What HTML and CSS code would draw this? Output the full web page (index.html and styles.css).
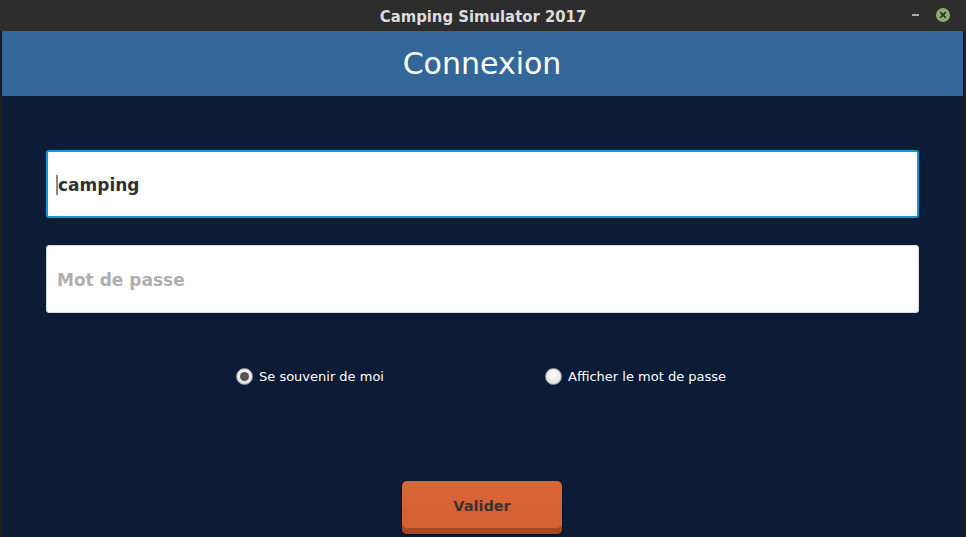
FILE: index.html
```html
<!DOCTYPE html>
<html>
<head>
<meta charset="utf-8">
<link rel="stylesheet" href="styles.css">
</head>
<body>
<div class="window">
  <div class="titlebar">
    <span class="title">Camping Simulator 2017</span>
    <div class="controls">
      <span class="min"></span>
      <span class="close">
        <svg width="14" height="14" viewBox="0 0 14 14"><circle cx="7" cy="7" r="7" fill="#8fae6e"/><path d="M4.6 4.6 L9.4 9.4 M9.4 4.6 L4.6 9.4" stroke="#2d2d2d" stroke-width="1.6" stroke-linecap="round"/></svg>
      </span>
    </div>
  </div>
  <div class="content">
    <div class="header">Connexion</div>
    <div class="form">
      <div class="field focused"><span class="caret"></span><span class="value">camping</span></div>
      <div class="field"><span class="placeholder">Mot de passe</span></div>
      <div class="options">
        <label class="radio"><span class="dot checked"></span>Se souvenir de moi</label>
        <label class="radio"><span class="dot"></span>Afficher le mot de passe</label>
      </div>
      <div class="actions">
        <button class="btn">Valider</button>
      </div>
    </div>
  </div>
</div>
</body>
</html>
```
FILE: styles.css
```css
html, body {
  margin: 0;
  padding: 0;
  width: 966px;
  height: 537px;
  overflow: hidden;
  background: #1c1c1c;
}
.window {
  width: 966px;
  height: 537px;
  display: flex;
  flex-direction: column;
  background: #1c1c1c;
}
.titlebar {
  height: 31px;
  background: #2d2d2d;
  display: flex;
  align-items: center;
  justify-content: center;
  position: relative;
  flex: none;
}
.title {
  font-family: "DejaVu Sans Condensed", "DejaVu Sans", sans-serif;
  font-weight: bold;
  font-size: 16.5px;
  color: #dcdcdc;
  padding-top: 1px;
}
.controls {
  position: absolute;
  right: 16px;
  top: 8px;
  display: flex;
  align-items: center;
  gap: 17px;
}
.min {
  width: 7px;
  height: 2px;
  background: #a8a8a8;
  display: block;
}
.close { display: block; height: 14px; }
.content {
  flex: 1;
  display: flex;
  flex-direction: column;
  margin-left: 2px;
  margin-right: 3px;
  background: #0c1b36;
}
.header {
  height: 65px;
  background: #336699;
  color: #ffffff;
  font-family: "DejaVu Sans", sans-serif;
  font-size: 30px;
  display: flex;
  align-items: center;
  justify-content: center;
  flex: none;
  box-sizing: border-box;
  padding-right: 1px;
}
.form {
  padding: 54px 44px 0 44px;
  display: flex;
  flex-direction: column;
}
.field {
  height: 68px;
  box-sizing: border-box;
  background: #ffffff;
  border: 1px solid #dadada;
  border-radius: 3px;
  display: flex;
  align-items: center;
  padding-left: 10px;
  font-family: "DejaVu Sans", sans-serif;
  font-weight: bold;
  font-size: 17px;
  margin-bottom: 27px;
}
.field.focused {
  border: 2px solid #0a9ad6;
  padding-left: 8px;
}
.caret {
  width: 2px;
  height: 20px;
  background: #888;
  display: inline-block;
  margin-top: 1px;
}
.value { color: #33302f; margin-top: 2px; }
.placeholder { color: #b0aeae; margin-top: 1px; }
.options {
  display: flex;
  margin-top: 28px;
  padding-left: 190px;
  gap: 161px;
}
.radio {
  display: flex;
  align-items: center;
  gap: 6px;
  font-family: "DejaVu Sans", sans-serif;
  font-size: 13px;
  color: #ffffff;
}
.dot {
  width: 17px;
  height: 17px;
  flex: none;
  border-radius: 50%;
  box-sizing: border-box;
  background: radial-gradient(circle at 50% 40%, #ffffff 0%, #e8e8e8 60%, #c4c4c4 100%);
  border: 1px solid #9a9a9a;
  position: relative;
}
.dot.checked::after {
  content: "";
  position: absolute;
  left: 3px;
  top: 3px;
  width: 9px;
  height: 9px;
  border-radius: 50%;
  background: #555;
}
.actions {
  display: flex;
  justify-content: center;
  margin-top: 96px;
  padding-right: 1px;
}
.btn {
  width: 160px;
  height: 53px;
  box-sizing: border-box;
  border: none;
  border-radius: 5px;
  background: linear-gradient(#d9653a, #d4602f);
  box-shadow: inset 0 -6px 0 #a8491d, 0 1px 2px rgba(0,0,0,0.5);
  color: #3a3333;
  font-family: "DejaVu Sans", sans-serif;
  font-weight: bold;
  font-size: 14.5px;
  padding-bottom: 5px;
}
```
